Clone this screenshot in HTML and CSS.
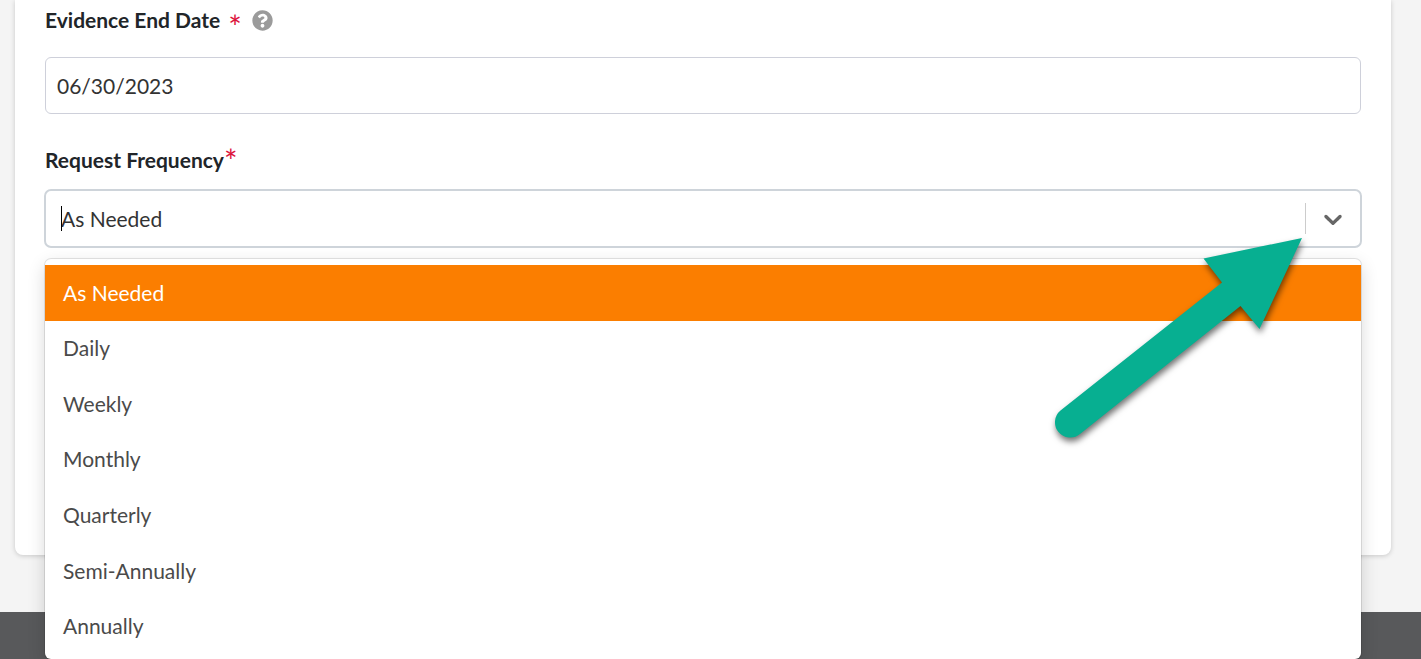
FILE: index.html
```html
<!DOCTYPE html>
<html lang="en">
<head>
<meta charset="utf-8">
<meta name="viewport" content="width=device-width, initial-scale=1">
<title>Evidence Request</title>
<link rel="stylesheet" href="styles.css">
</head>
<body>
<main class="page">
  <form class="card">
    <div class="field">
      <div class="label-row">
        <label class="label" for="end-date">Evidence End Date<span class="required spaced">*</span></label>
        <button class="help" type="button" aria-label="Help">
          <svg class="help-icon" viewBox="0 0 512 512" aria-hidden="true"><path fill="currentColor" d="M504 256c0 136.997-111.043 248-248 248S8 392.997 8 256C8 119.083 119.043 8 256 8s248 111.083 248 248zM262.655 90c-54.497 0-89.255 22.957-116.549 63.758-3.536 5.286-2.353 12.415 2.715 16.258l34.699 26.31c5.205 3.947 12.621 3.008 16.665-2.122 17.864-22.658 30.113-35.797 57.303-35.797 20.429 0 45.698 13.148 45.698 32.958 0 14.976-12.363 22.667-32.534 33.976C247.128 238.528 216 254.941 216 296v4c0 6.627 5.373 12 12 12h56c6.627 0 12-5.373 12-12v-1.333c0-28.462 83.186-29.647 83.186-106.667 0-58.002-60.165-102-116.531-102zM256 338c-25.365 0-46 20.635-46 46 0 25.364 20.635 46 46 46s46-20.636 46-46c0-25.365-20.635-46-46-46z"/></svg>
        </button>
      </div>
      <input class="text-box" id="end-date" type="text" value="06/30/2023">
    </div>
    <div class="field frequency-field">
      <label class="label" for="frequency">Request Frequency<span class="required raised">*</span></label>
      <div class="combo">
        <div class="control">
          <select class="choice" id="frequency">
            <option selected>As Needed</option>
            <option>Daily</option>
            <option>Weekly</option>
            <option>Monthly</option>
            <option>Quarterly</option>
            <option>Semi-Annually</option>
            <option>Annually</option>
          </select>
          <span class="caret"></span>
          <span class="separator"></span>
          <button class="toggle" type="button" aria-label="Show options">
            <svg class="chevron" viewBox="0 0 20 20" aria-hidden="true"><path fill="currentColor" d="M4.516 7.548c0.436-0.446 1.043-0.481 1.576 0l3.908 3.747 3.908-3.747c0.533-0.481 1.141-0.446 1.574 0 0.436 0.445 0.408 1.197 0 1.615-0.406 0.418-4.695 4.502-4.695 4.502-0.217 0.223-0.502 0.335-0.787 0.335s-0.57-0.112-0.789-0.335c0 0-4.287-4.084-4.695-4.502s-0.436-1.17 0-1.615z"/></svg>
          </button>
        </div>
        <div class="menu" role="listbox" aria-label="Request Frequency">
          <button class="option selected" type="button" role="option" aria-selected="true">As Needed</button>
          <button class="option" type="button" role="option">Daily</button>
          <button class="option" type="button" role="option">Weekly</button>
          <button class="option" type="button" role="option">Monthly</button>
          <button class="option" type="button" role="option">Quarterly</button>
          <button class="option" type="button" role="option">Semi-Annually</button>
          <button class="option" type="button" role="option">Annually</button>
        </div>
        <svg class="pointer" viewBox="0 0 260 216" aria-hidden="true"><path fill="#07af91" d="M252 8L153.500 28.500L172 52.500L10.500 180.500A15 15 0 0 0 30 204L190.500 76L209.500 99Z"/></svg>
      </div>
    </div>
  </form>
</main>
<footer class="footer"></footer>
</body>
</html>
```
FILE: styles.css
```css
* {
  box-sizing: border-box;
}

body {
  margin: 0;
  min-height: 100vh;
  display: flex;
  flex-direction: column;
  overflow: hidden;
  background: #f4f4f4;
  color: #212529;
  font: 400 21px/32px Lato, "Liberation Sans", sans-serif;
}

button,
input,
select {
  margin: 0;
  font: inherit;
  color: inherit;
}

.page {
  padding: 0 30px 57px 15px;
}

.card {
  display: flex;
  flex-direction: column;
  gap: 30px;
  padding: 4px 30px 307px;
  border-radius: 0 0 8px 8px;
  background: #fff;
  box-shadow: 0 1px 5px rgba(0, 0, 0, 0.18);
}

.field {
  display: flex;
  flex-direction: column;
  gap: 21px;
}

.frequency-field {
  gap: 13px;
}

.label-row {
  display: flex;
  align-items: center;
}

.label {
  font-weight: 700;
}

.required {
  color: #dc143c;
  font-size: 32px;
  font-weight: 400;
  line-height: 0;
}

.spaced {
  margin-left: 8px;
  vertical-align: -11px;
}

.raised {
  vertical-align: -5px;
}

.help {
  display: flex;
  margin-left: 10px;
  padding: 0;
  border: 0;
  background: none;
  color: #9b9b9b;
}

.help-icon {
  width: 21px;
  height: 21px;
}

.text-box {
  width: 100%;
  height: 57px;
  padding: 0 11px;
  border: 1px solid #ced0da;
  border-radius: 6px;
  background: #fff;
  color: #333;
}

.combo {
  position: relative;
  margin: 0 -1px;
}

.control {
  display: flex;
  align-items: center;
  height: 59px;
  border: 2px solid #ced4da;
  border-radius: 7px;
  background: #fff;
}

.choice {
  flex: 1;
  height: 100%;
  padding: 0 15px;
  border: 0;
  outline: 0;
  appearance: none;
  background: transparent;
  color: #333;
}

.caret {
  position: absolute;
  left: 17px;
  top: 17px;
  width: 1px;
  height: 25px;
  background: #000;
}

.separator {
  width: 1px;
  height: 31px;
  background: #ccc;
}

.toggle {
  display: flex;
  padding: 0 12px;
  border: 0;
  background: none;
  color: #666;
}

.chevron {
  width: 30px;
  height: 30px;
}

.menu {
  position: absolute;
  z-index: 1;
  top: 70px;
  left: 1px;
  right: 1px;
  display: grid;
  grid-auto-rows: 1fr;
  height: 400px;
  padding: 6px 0 5px;
  border-radius: 6px;
  background: #fff;
  box-shadow: 0 0 0 1px rgba(0, 0, 0, 0.1), 0 6px 18px rgba(0, 0, 0, 0.16);
}

.option {
  padding: 0 18px;
  border: 0;
  background: none;
  color: #4a4a4a;
  text-align: left;
}

.selected {
  background: #fb7e00;
  color: #fff;
}

.pointer {
  position: absolute;
  z-index: 2;
  top: 41px;
  right: 52px;
  width: 260px;
  height: 216px;
  filter: drop-shadow(1px 4px 3px rgba(0, 0, 0, 0.55));
  pointer-events: none;
}

.footer {
  flex: 1;
  background: #58595b;
}
```
